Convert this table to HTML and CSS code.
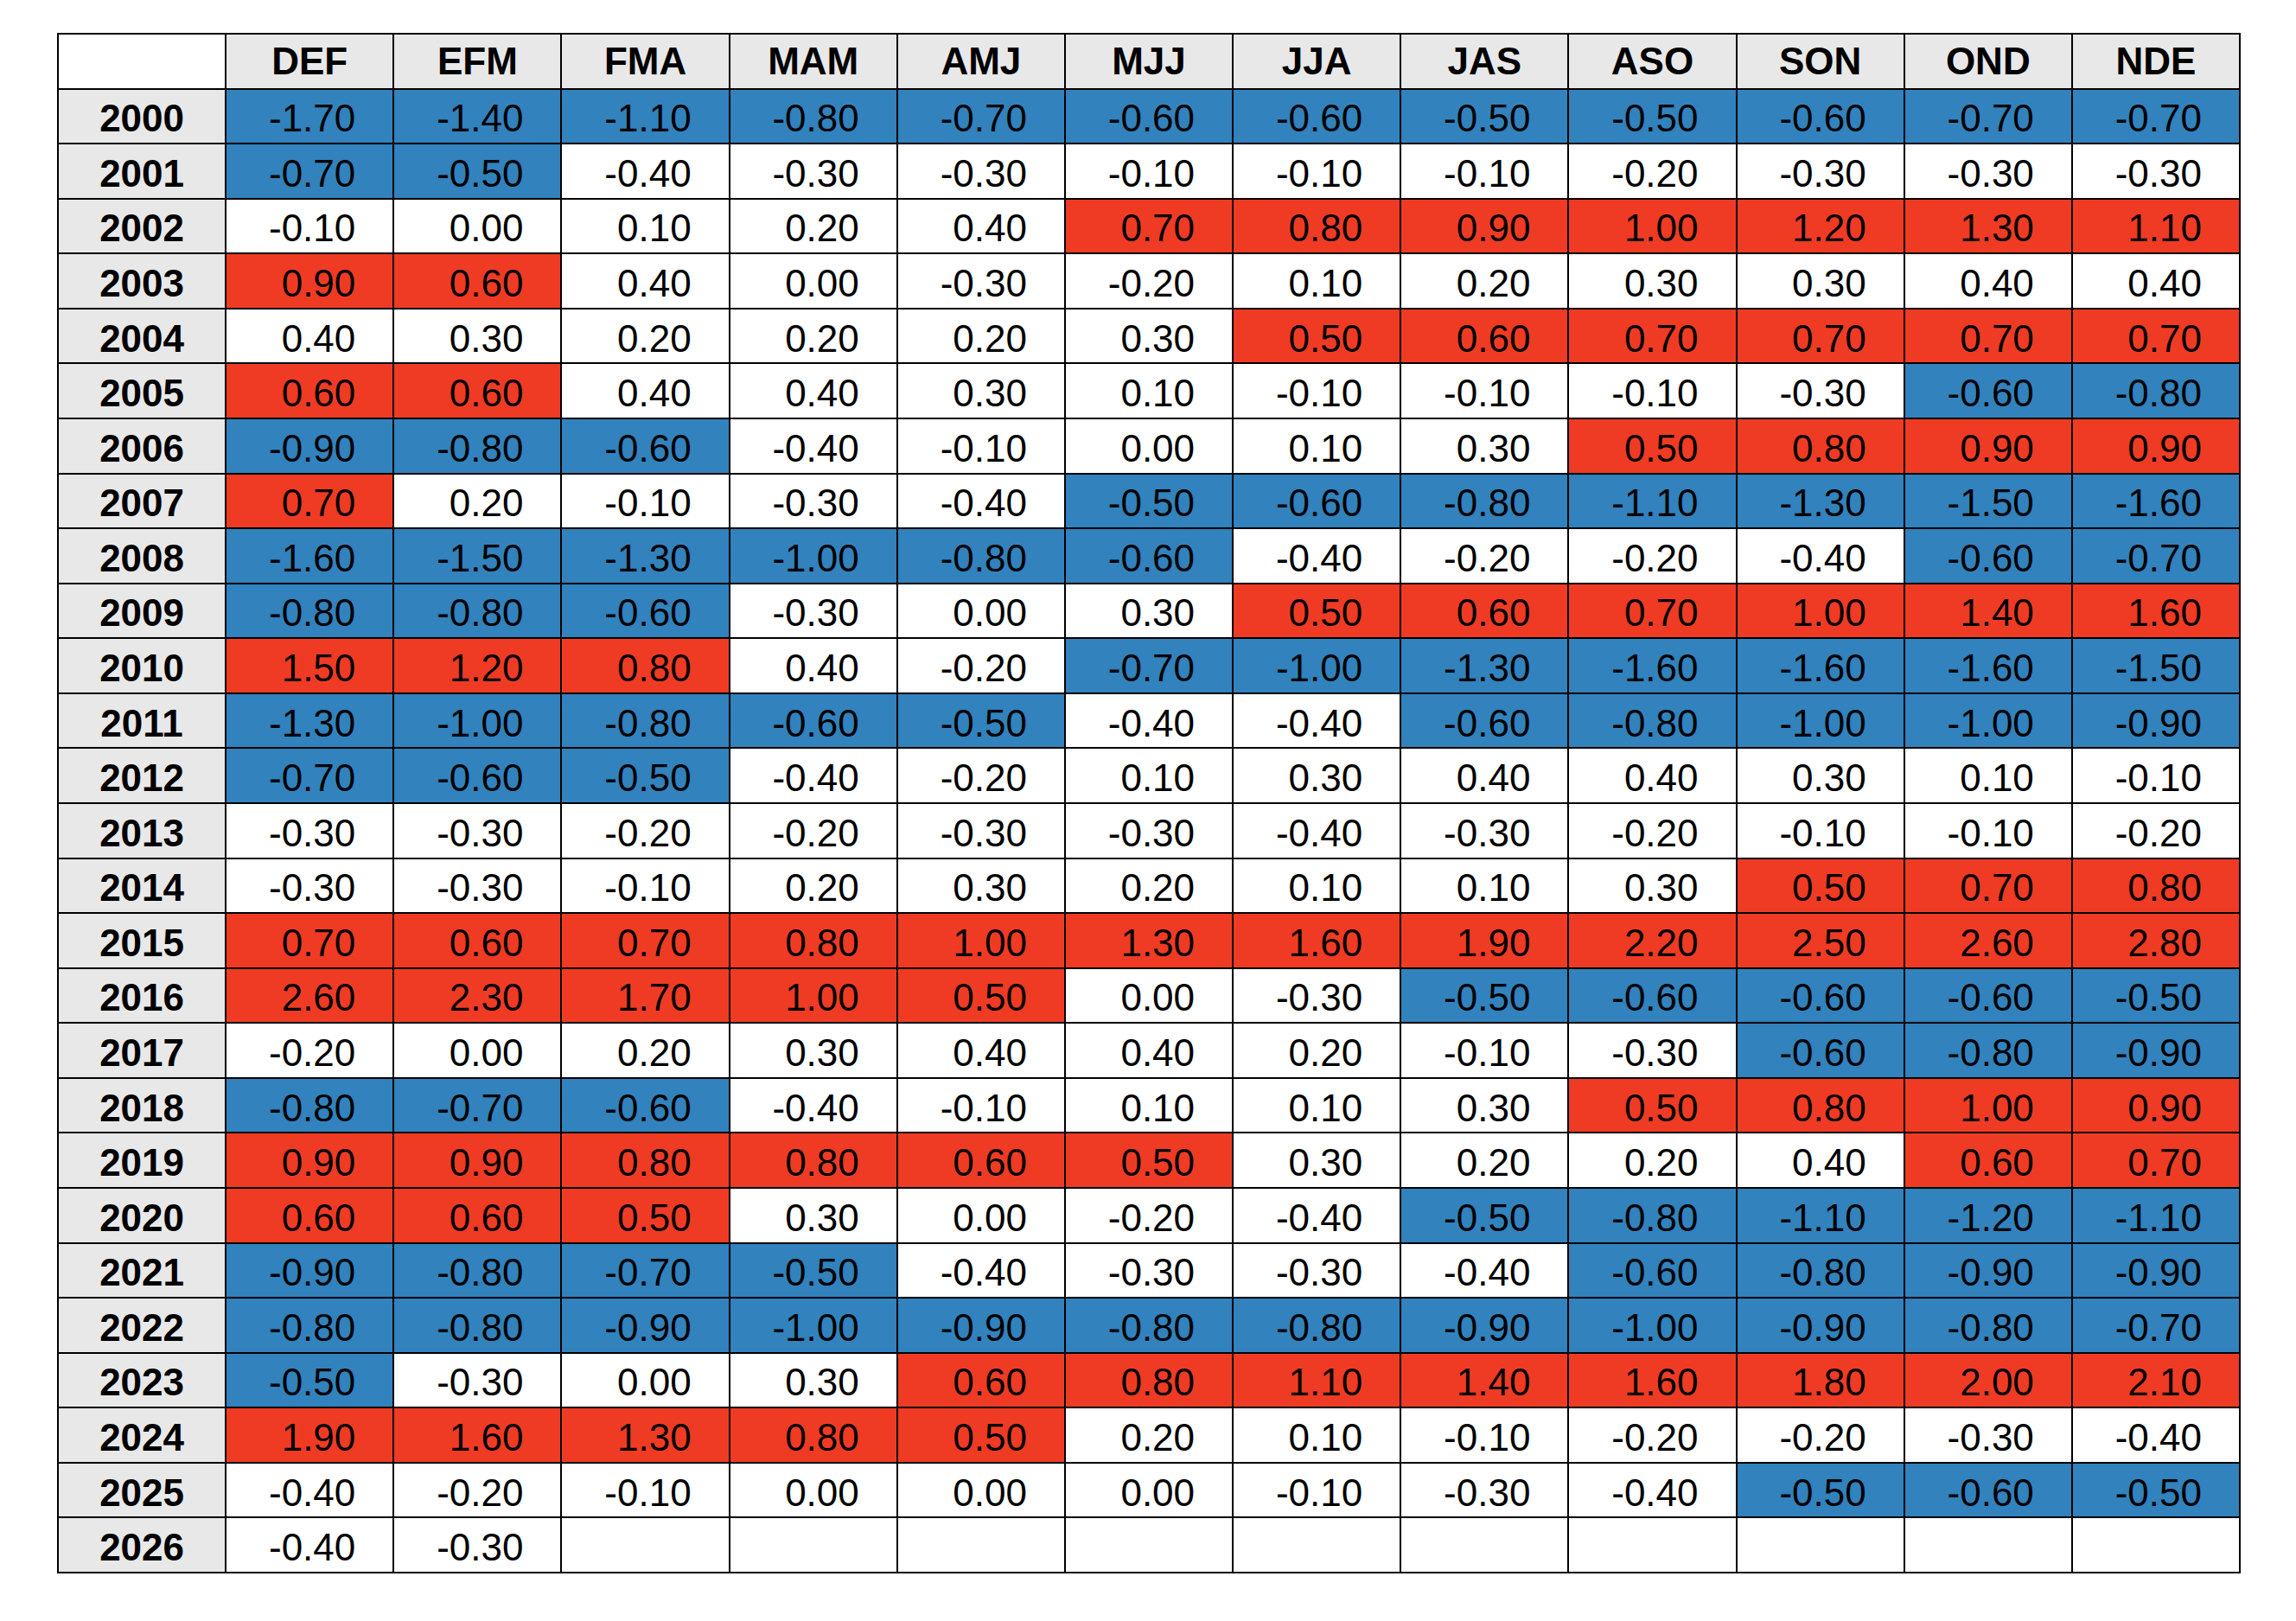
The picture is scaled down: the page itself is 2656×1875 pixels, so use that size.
FILE: index.html
```html
<!DOCTYPE html>
<html>
<head>
<meta charset="utf-8">
<link rel="stylesheet" href="styles.css">
</head>
<body>
<div class="sheet">
<div class="corner"></div><div class="hd">DEF</div><div class="hd">EFM</div><div class="hd">FMA</div><div class="hd">MAM</div><div class="hd">AMJ</div><div class="hd">MJJ</div><div class="hd">JJA</div><div class="hd">JAS</div><div class="hd">ASO</div><div class="hd">SON</div><div class="hd">OND</div><div class="hd">NDE</div>
<div class="yr">2000</div><div class="v c">-1.70</div><div class="v c">-1.40</div><div class="v c">-1.10</div><div class="v c">-0.80</div><div class="v c">-0.70</div><div class="v c">-0.60</div><div class="v c">-0.60</div><div class="v c">-0.50</div><div class="v c">-0.50</div><div class="v c">-0.60</div><div class="v c">-0.70</div><div class="v c">-0.70</div>
<div class="yr">2001</div><div class="v c">-0.70</div><div class="v c">-0.50</div><div class="v">-0.40</div><div class="v">-0.30</div><div class="v">-0.30</div><div class="v">-0.10</div><div class="v">-0.10</div><div class="v">-0.10</div><div class="v">-0.20</div><div class="v">-0.30</div><div class="v">-0.30</div><div class="v">-0.30</div>
<div class="yr">2002</div><div class="v">-0.10</div><div class="v">0.00</div><div class="v">0.10</div><div class="v">0.20</div><div class="v">0.40</div><div class="v w">0.70</div><div class="v w">0.80</div><div class="v w">0.90</div><div class="v w">1.00</div><div class="v w">1.20</div><div class="v w">1.30</div><div class="v w">1.10</div>
<div class="yr">2003</div><div class="v w">0.90</div><div class="v w">0.60</div><div class="v">0.40</div><div class="v">0.00</div><div class="v">-0.30</div><div class="v">-0.20</div><div class="v">0.10</div><div class="v">0.20</div><div class="v">0.30</div><div class="v">0.30</div><div class="v">0.40</div><div class="v">0.40</div>
<div class="yr">2004</div><div class="v">0.40</div><div class="v">0.30</div><div class="v">0.20</div><div class="v">0.20</div><div class="v">0.20</div><div class="v">0.30</div><div class="v w">0.50</div><div class="v w">0.60</div><div class="v w">0.70</div><div class="v w">0.70</div><div class="v w">0.70</div><div class="v w">0.70</div>
<div class="yr">2005</div><div class="v w">0.60</div><div class="v w">0.60</div><div class="v">0.40</div><div class="v">0.40</div><div class="v">0.30</div><div class="v">0.10</div><div class="v">-0.10</div><div class="v">-0.10</div><div class="v">-0.10</div><div class="v">-0.30</div><div class="v c">-0.60</div><div class="v c">-0.80</div>
<div class="yr">2006</div><div class="v c">-0.90</div><div class="v c">-0.80</div><div class="v c">-0.60</div><div class="v">-0.40</div><div class="v">-0.10</div><div class="v">0.00</div><div class="v">0.10</div><div class="v">0.30</div><div class="v w">0.50</div><div class="v w">0.80</div><div class="v w">0.90</div><div class="v w">0.90</div>
<div class="yr">2007</div><div class="v w">0.70</div><div class="v">0.20</div><div class="v">-0.10</div><div class="v">-0.30</div><div class="v">-0.40</div><div class="v c">-0.50</div><div class="v c">-0.60</div><div class="v c">-0.80</div><div class="v c">-1.10</div><div class="v c">-1.30</div><div class="v c">-1.50</div><div class="v c">-1.60</div>
<div class="yr">2008</div><div class="v c">-1.60</div><div class="v c">-1.50</div><div class="v c">-1.30</div><div class="v c">-1.00</div><div class="v c">-0.80</div><div class="v c">-0.60</div><div class="v">-0.40</div><div class="v">-0.20</div><div class="v">-0.20</div><div class="v">-0.40</div><div class="v c">-0.60</div><div class="v c">-0.70</div>
<div class="yr">2009</div><div class="v c">-0.80</div><div class="v c">-0.80</div><div class="v c">-0.60</div><div class="v">-0.30</div><div class="v">0.00</div><div class="v">0.30</div><div class="v w">0.50</div><div class="v w">0.60</div><div class="v w">0.70</div><div class="v w">1.00</div><div class="v w">1.40</div><div class="v w">1.60</div>
<div class="yr">2010</div><div class="v w">1.50</div><div class="v w">1.20</div><div class="v w">0.80</div><div class="v">0.40</div><div class="v">-0.20</div><div class="v c">-0.70</div><div class="v c">-1.00</div><div class="v c">-1.30</div><div class="v c">-1.60</div><div class="v c">-1.60</div><div class="v c">-1.60</div><div class="v c">-1.50</div>
<div class="yr">2011</div><div class="v c">-1.30</div><div class="v c">-1.00</div><div class="v c">-0.80</div><div class="v c">-0.60</div><div class="v c">-0.50</div><div class="v">-0.40</div><div class="v">-0.40</div><div class="v c">-0.60</div><div class="v c">-0.80</div><div class="v c">-1.00</div><div class="v c">-1.00</div><div class="v c">-0.90</div>
<div class="yr">2012</div><div class="v c">-0.70</div><div class="v c">-0.60</div><div class="v c">-0.50</div><div class="v">-0.40</div><div class="v">-0.20</div><div class="v">0.10</div><div class="v">0.30</div><div class="v">0.40</div><div class="v">0.40</div><div class="v">0.30</div><div class="v">0.10</div><div class="v">-0.10</div>
<div class="yr">2013</div><div class="v">-0.30</div><div class="v">-0.30</div><div class="v">-0.20</div><div class="v">-0.20</div><div class="v">-0.30</div><div class="v">-0.30</div><div class="v">-0.40</div><div class="v">-0.30</div><div class="v">-0.20</div><div class="v">-0.10</div><div class="v">-0.10</div><div class="v">-0.20</div>
<div class="yr">2014</div><div class="v">-0.30</div><div class="v">-0.30</div><div class="v">-0.10</div><div class="v">0.20</div><div class="v">0.30</div><div class="v">0.20</div><div class="v">0.10</div><div class="v">0.10</div><div class="v">0.30</div><div class="v w">0.50</div><div class="v w">0.70</div><div class="v w">0.80</div>
<div class="yr">2015</div><div class="v w">0.70</div><div class="v w">0.60</div><div class="v w">0.70</div><div class="v w">0.80</div><div class="v w">1.00</div><div class="v w">1.30</div><div class="v w">1.60</div><div class="v w">1.90</div><div class="v w">2.20</div><div class="v w">2.50</div><div class="v w">2.60</div><div class="v w">2.80</div>
<div class="yr">2016</div><div class="v w">2.60</div><div class="v w">2.30</div><div class="v w">1.70</div><div class="v w">1.00</div><div class="v w">0.50</div><div class="v">0.00</div><div class="v">-0.30</div><div class="v c">-0.50</div><div class="v c">-0.60</div><div class="v c">-0.60</div><div class="v c">-0.60</div><div class="v c">-0.50</div>
<div class="yr">2017</div><div class="v">-0.20</div><div class="v">0.00</div><div class="v">0.20</div><div class="v">0.30</div><div class="v">0.40</div><div class="v">0.40</div><div class="v">0.20</div><div class="v">-0.10</div><div class="v">-0.30</div><div class="v c">-0.60</div><div class="v c">-0.80</div><div class="v c">-0.90</div>
<div class="yr">2018</div><div class="v c">-0.80</div><div class="v c">-0.70</div><div class="v c">-0.60</div><div class="v">-0.40</div><div class="v">-0.10</div><div class="v">0.10</div><div class="v">0.10</div><div class="v">0.30</div><div class="v w">0.50</div><div class="v w">0.80</div><div class="v w">1.00</div><div class="v w">0.90</div>
<div class="yr">2019</div><div class="v w">0.90</div><div class="v w">0.90</div><div class="v w">0.80</div><div class="v w">0.80</div><div class="v w">0.60</div><div class="v w">0.50</div><div class="v">0.30</div><div class="v">0.20</div><div class="v">0.20</div><div class="v">0.40</div><div class="v w">0.60</div><div class="v w">0.70</div>
<div class="yr">2020</div><div class="v w">0.60</div><div class="v w">0.60</div><div class="v w">0.50</div><div class="v">0.30</div><div class="v">0.00</div><div class="v">-0.20</div><div class="v">-0.40</div><div class="v c">-0.50</div><div class="v c">-0.80</div><div class="v c">-1.10</div><div class="v c">-1.20</div><div class="v c">-1.10</div>
<div class="yr">2021</div><div class="v c">-0.90</div><div class="v c">-0.80</div><div class="v c">-0.70</div><div class="v c">-0.50</div><div class="v">-0.40</div><div class="v">-0.30</div><div class="v">-0.30</div><div class="v">-0.40</div><div class="v c">-0.60</div><div class="v c">-0.80</div><div class="v c">-0.90</div><div class="v c">-0.90</div>
<div class="yr">2022</div><div class="v c">-0.80</div><div class="v c">-0.80</div><div class="v c">-0.90</div><div class="v c">-1.00</div><div class="v c">-0.90</div><div class="v c">-0.80</div><div class="v c">-0.80</div><div class="v c">-0.90</div><div class="v c">-1.00</div><div class="v c">-0.90</div><div class="v c">-0.80</div><div class="v c">-0.70</div>
<div class="yr">2023</div><div class="v c">-0.50</div><div class="v">-0.30</div><div class="v">0.00</div><div class="v">0.30</div><div class="v w">0.60</div><div class="v w">0.80</div><div class="v w">1.10</div><div class="v w">1.40</div><div class="v w">1.60</div><div class="v w">1.80</div><div class="v w">2.00</div><div class="v w">2.10</div>
<div class="yr">2024</div><div class="v w">1.90</div><div class="v w">1.60</div><div class="v w">1.30</div><div class="v w">0.80</div><div class="v w">0.50</div><div class="v">0.20</div><div class="v">0.10</div><div class="v">-0.10</div><div class="v">-0.20</div><div class="v">-0.20</div><div class="v">-0.30</div><div class="v">-0.40</div>
<div class="yr">2025</div><div class="v">-0.40</div><div class="v">-0.20</div><div class="v">-0.10</div><div class="v">0.00</div><div class="v">0.00</div><div class="v">0.00</div><div class="v">-0.10</div><div class="v">-0.30</div><div class="v">-0.40</div><div class="v c">-0.50</div><div class="v c">-0.60</div><div class="v c">-0.50</div>
<div class="yr">2026</div><div class="v">-0.40</div><div class="v">-0.30</div><div class="v"></div><div class="v"></div><div class="v"></div><div class="v"></div><div class="v"></div><div class="v"></div><div class="v"></div><div class="v"></div><div class="v"></div><div class="v"></div>
</div>
</body>
</html>
```
FILE: styles.css
```css
html, body {
  margin: 0;
  padding: 0;
  background: #ffffff;
}

body {
  font-family: "Liberation Sans", Arial, sans-serif;
  color: #000000;
}

.sheet {
  box-sizing: border-box;
  margin: 38px 0 0 66px;
  width: 2526px;
  height: 1782px;
  padding: 2px;
  gap: 2px;
  background: #000000;
  display: grid;
  grid-template-columns: repeat(13, 1fr);
  grid-template-rows: repeat(28, 1fr);
}

.sheet > div {
  display: flex;
  align-items: center;
  font-size: 44px;
  line-height: 1;
  padding-top: 6px;
  box-sizing: border-box;
  min-width: 0;
  min-height: 0;
}

.corner {
  background: #ffffff;
}

.sheet > .hd {
  background: #e8e8e8;
  font-weight: bold;
  justify-content: center;
  padding-top: 0;
}

.yr {
  background: #e8e8e8;
  font-weight: bold;
  justify-content: center;
}

.v {
  background: #ffffff;
  justify-content: flex-end;
  padding-right: 43px;
}

.v.c {
  background: #3182bd;
}

.v.w {
  background: #ef3b24;
}
```
